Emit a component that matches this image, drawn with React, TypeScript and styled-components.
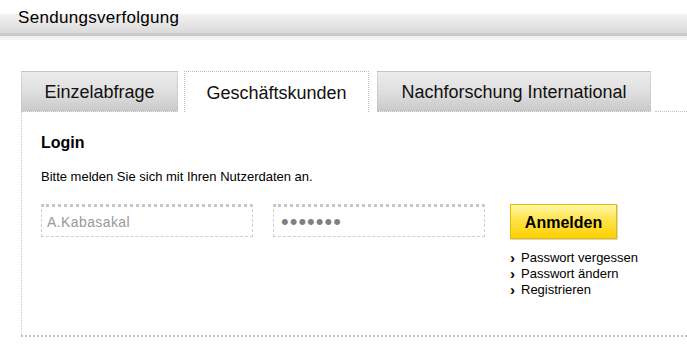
import styled, { createGlobalStyle } from "styled-components";

const Global = createGlobalStyle`
  html, body {
    margin: 0;
    padding: 0;
    background: #fff;
    font-family: "Liberation Sans", Arial, sans-serif;
    color: #000;
  }
`;

const Header = styled.div`
  height: 40px;
  background: linear-gradient(
    to bottom,
    #fff 0,
    #fff 14px,
    #f3f3f3 14px,
    #dadada 33px,
    #c9c9c9 33px,
    #c9c9c9 36px,
    #ededed 36px,
    #f6f6f6 40px
  );
  h1 {
    margin: 0;
    padding: 7px 0 0 18px;
    font-size: 17px;
    letter-spacing: 0.3px;
    font-weight: 400;
    line-height: 22px;
  }
`;

const Main = styled.div`
  padding: 31px 0 0 21px;
`;

const TabRow = styled.div`
  display: flex;
  align-items: flex-end;
  height: 41px;
`;

const Tab = styled.div<{ $active?: boolean; $width: number; $gap: number }>`
  box-sizing: border-box;
  width: ${({ $width }) => $width}px;
  height: 41px;
  margin-right: ${({ $gap }) => $gap}px;
  display: flex;
  align-items: center;
  justify-content: center;
  font-size: 18px;
  padding-top: 2px;
  color: #111;
  border: 1px dotted #bdbdbd;
  border-bottom: ${({ $active }) => ($active ? "none" : "1px dotted #bdbdbd")};
  background: ${({ $active }) =>
    $active ? "#fff" : "linear-gradient(to bottom, #ececec 0%, #dedede 55%, #c9c9c9 100%)"};
`;

const TabFill = styled.div`
  flex: 1;
  height: 41px;
  box-sizing: border-box;
  border-bottom: 1px dotted #c4c4c4;
`;

const Panel = styled.div`
  box-sizing: border-box;
  height: 225px;
  padding: 21px 0 0 19px;
  border-left: 1px dotted #c4c4c4;
  border-bottom: 2px dotted #c4c4c4;
`;

const Title = styled.h2`
  margin: 0;
  font-size: 16px;
  font-weight: 700;
  line-height: 20px;
`;

const Intro = styled.p`
  margin: 16px 0 0;
  font-size: 13px;
  line-height: 16px;
`;

const FormRow = styled.div`
  display: flex;
  align-items: flex-start;
  margin-top: 19px;
`;

const Field = styled.input<{ $gap: number }>`
  box-sizing: border-box;
  width: 212px;
  height: 33px;
  margin-right: ${({ $gap }) => $gap}px;
  padding: 0 5px;
  border: 1px dashed #cfcfcf;
  border-top: 3px dotted #c6c6c6;
  font-family: "Liberation Sans", Arial, sans-serif;
  font-size: 14px;
  letter-spacing: 0.4px;
  color: #999;
  outline: none;
  background: #fff;
  &[type="password"] {
    padding: 0 7px;
    font-size: 22px;
    letter-spacing: 1px;
    color: #808080;
  }
`;

const Side = styled.div`
  display: flex;
  flex-direction: column;
`;

const Button = styled.button`
  box-sizing: border-box;
  width: 107px;
  height: 35px;
  border: 1px solid #e3bb00;
  box-shadow: 1px 1px 0 #d8d8d8;
  background: linear-gradient(to bottom, #fff7a8 0%, #ffe34a 45%, #ffd000 100%);
  font-family: "Liberation Sans", Arial, sans-serif;
  font-size: 16px;
  font-weight: 700;
  color: #000;
  padding: 3px 0 0;
  cursor: pointer;
`;

const Links = styled.ul`
  list-style: none;
  margin: 11px 0 0;
  padding: 0;
`;

const LinkItem = styled.li`
  display: flex;
  align-items: center;
  font-size: 13px;
  line-height: 16px;
  color: #000;
  &::before {
    content: "›";
    font-weight: 700;
    font-size: 15px;
    width: 11px;
    line-height: 14px;
  }
`;

export default function App() {
  return (
    <>
      <Global />
      <Header>
        <h1>Sendungsverfolgung</h1>
      </Header>
      <Main>
        <TabRow>
          <Tab $width={157} $gap={6}>Einzelabfrage</Tab>
          <Tab $active $width={185} $gap={8}>Geschäftskunden</Tab>
          <Tab $width={274} $gap={4}>Nachforschung International</Tab>
          <TabFill />
        </TabRow>
        <Panel>
          <Title>Login</Title>
          <Intro>Bitte melden Sie sich mit Ihren Nutzerdaten an.</Intro>
          <FormRow>
            <Field $gap={20} type="text" defaultValue="A.Kabasakal" />
            <Field $gap={25} type="password" defaultValue="1234567" />
            <Side>
              <Button>Anmelden</Button>
              <Links>
                <LinkItem>Passwort vergessen</LinkItem>
                <LinkItem>Passwort ändern</LinkItem>
                <LinkItem>Registrieren</LinkItem>
              </Links>
            </Side>
          </FormRow>
        </Panel>
      </Main>
    </>
  );
}
